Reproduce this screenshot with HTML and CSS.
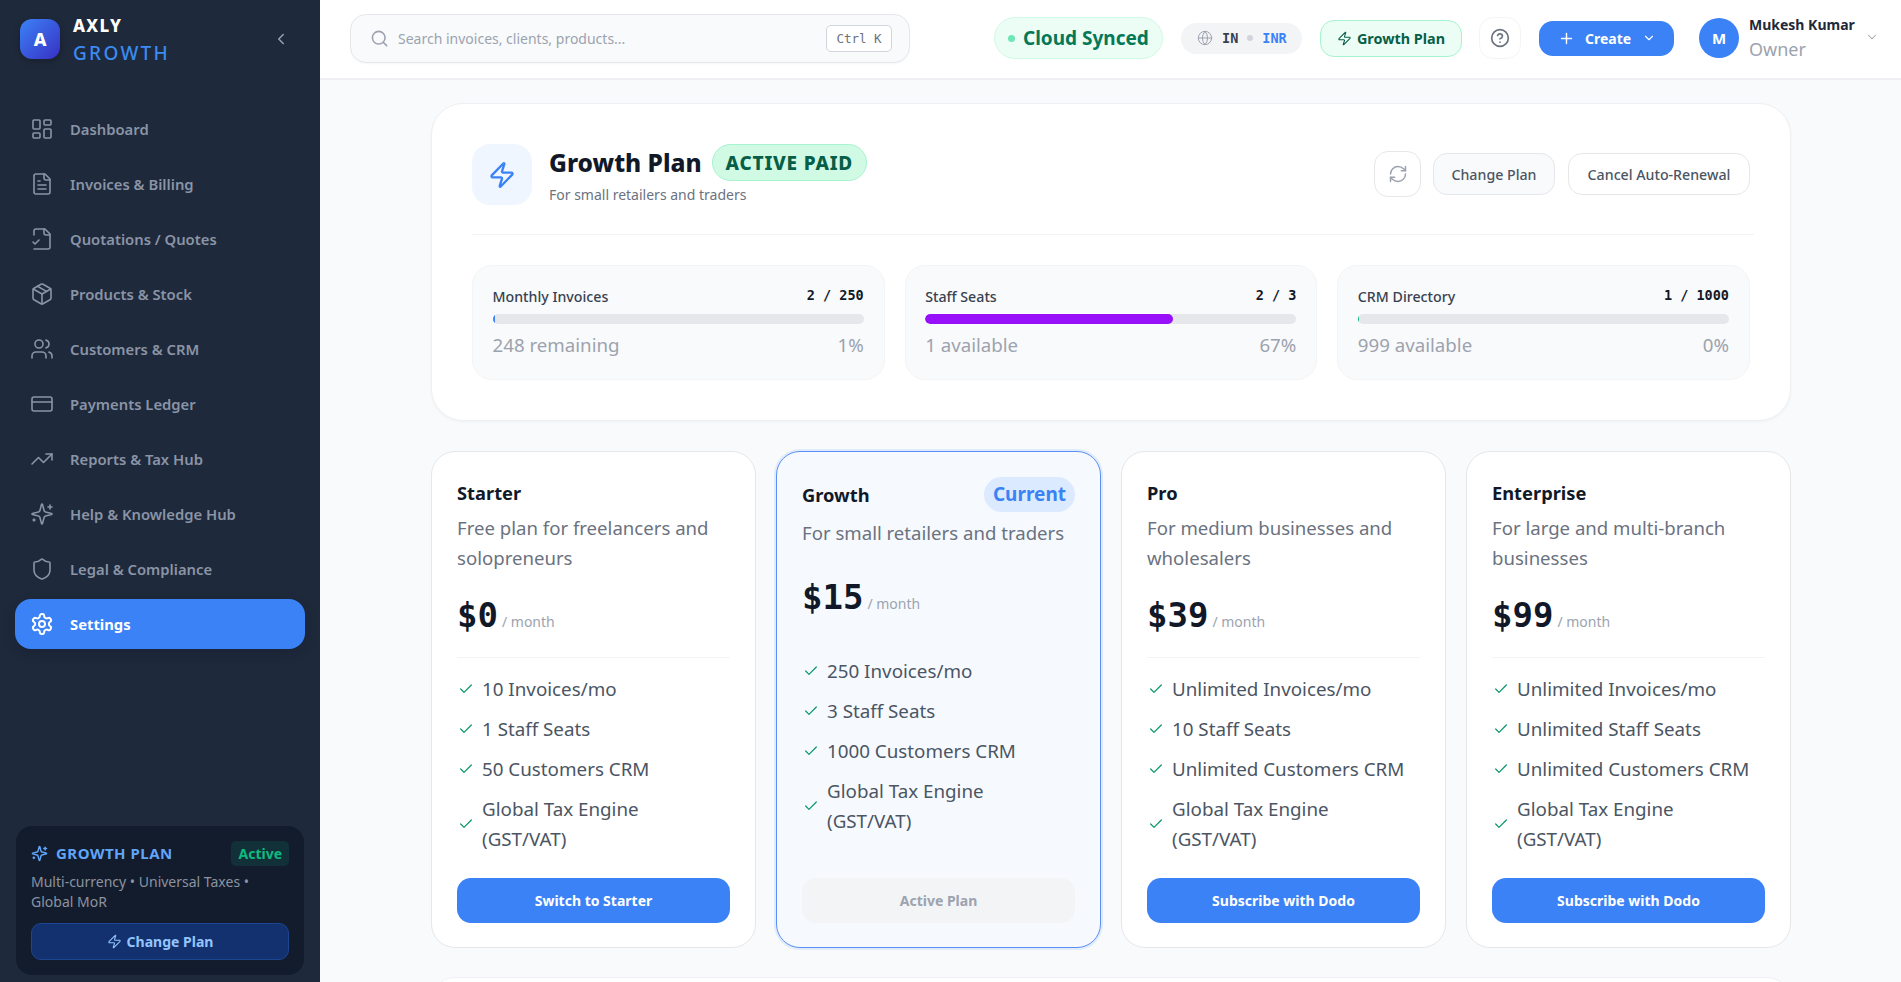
FILE: index.html
```html
<!DOCTYPE html>
<html lang="en">
<head>
<meta charset="utf-8">
<title>Axly Growth - Subscription</title>
<link rel="stylesheet" href="styles.css">
</head>
<body>
<svg class="sprite" aria-hidden="true">
  <symbol id="i-dash" viewBox="0 0 24 24"><rect x="3" y="3" width="7" height="9" rx="1"/><rect x="14" y="3" width="7" height="5" rx="1"/><rect x="14" y="12" width="7" height="9" rx="1"/><rect x="3" y="16" width="7" height="5" rx="1"/></symbol>
  <symbol id="i-file" viewBox="0 0 24 24"><path d="M15 2H6a2 2 0 0 0-2 2v16a2 2 0 0 0 2 2h12a2 2 0 0 0 2-2V7Z"/><path d="M14 2v4a2 2 0 0 0 2 2h4"/><path d="M10 9H8"/><path d="M16 13H8"/><path d="M16 17H8"/></symbol>
  <symbol id="i-filecheck" viewBox="0 0 24 24"><path d="M4 22h14a2 2 0 0 0 2-2V7l-5-5H6a2 2 0 0 0-2 2v4"/><path d="M14 2v4a2 2 0 0 0 2 2h4"/><path d="m3 15 2 2 4-4"/></symbol>
  <symbol id="i-package" viewBox="0 0 24 24"><path d="M11 21.73a2 2 0 0 0 2 0l7-4A2 2 0 0 0 21 16V8a2 2 0 0 0-1-1.73l-7-4a2 2 0 0 0-2 0l-7 4A2 2 0 0 0 3 8v8a2 2 0 0 0 1 1.73z"/><path d="M12 22V12"/><polyline points="3.29 7 12 12 20.71 7"/><path d="m7.5 4.27 9 5.15"/></symbol>
  <symbol id="i-users" viewBox="0 0 24 24"><path d="M16 21v-2a4 4 0 0 0-4-4H6a4 4 0 0 0-4 4v2"/><circle cx="9" cy="7" r="4"/><path d="M22 21v-2a4 4 0 0 0-3-3.87"/><path d="M16 3.13a4 4 0 0 1 0 7.75"/></symbol>
  <symbol id="i-card" viewBox="0 0 24 24"><rect x="2" y="5" width="20" height="14" rx="2"/><line x1="2" y1="10" x2="22" y2="10"/></symbol>
  <symbol id="i-trend" viewBox="0 0 24 24"><polyline points="22 7 13.5 15.5 8.5 10.5 2 17"/><polyline points="16 7 22 7 22 13"/></symbol>
  <symbol id="i-spark" viewBox="0 0 24 24"><path d="M9.937 15.5A2 2 0 0 0 8.5 14.063l-6.135-1.582a.5.5 0 0 1 0-.962L8.5 9.936A2 2 0 0 0 9.937 8.5l1.582-6.135a.5.5 0 0 1 .963 0L14.063 8.5A2 2 0 0 0 15.5 9.937l6.135 1.581a.5.5 0 0 1 0 .964L15.5 14.063a2 2 0 0 0-1.437 1.437l-1.582 6.135a.5.5 0 0 1-.963 0z"/><path d="M20 3v4"/><path d="M22 5h-4"/><path d="M4 17v2"/><path d="M5 18H3"/></symbol>
  <symbol id="i-shield" viewBox="0 0 24 24"><path d="M20 13c0 5-3.5 7.5-7.66 8.95a1 1 0 0 1-.67-.01C7.5 20.5 4 18 4 13V6a1 1 0 0 1 1-1c2 0 4.5-1.2 6.24-2.72a1.17 1.17 0 0 1 1.52 0C14.51 3.81 17 5 19 5a1 1 0 0 1 1 1z"/></symbol>
  <symbol id="i-gear" viewBox="0 0 24 24"><path d="M12.22 2h-.44a2 2 0 0 0-2 2v.18a2 2 0 0 1-1 1.73l-.43.25a2 2 0 0 1-2 0l-.15-.08a2 2 0 0 0-2.73.73l-.22.38a2 2 0 0 0 .73 2.73l.15.1a2 2 0 0 1 1 1.72v.51a2 2 0 0 1-1 1.74l-.15.09a2 2 0 0 0-.73 2.73l.22.38a2 2 0 0 0 2.73.73l.15-.08a2 2 0 0 1 2 0l.43.25a2 2 0 0 1 1 1.73V20a2 2 0 0 0 2 2h.44a2 2 0 0 0 2-2v-.18a2 2 0 0 1 1-1.73l.43-.25a2 2 0 0 1 2 0l.15.08a2 2 0 0 0 2.73-.73l.22-.39a2 2 0 0 0-.73-2.73l-.15-.08a2 2 0 0 1-1-1.74v-.5a2 2 0 0 1 1-1.74l.15-.09a2 2 0 0 0 .73-2.73l-.22-.38a2 2 0 0 0-2.73-.73l-.15.08a2 2 0 0 1-2 0l-.43-.25a2 2 0 0 1-1-1.73V4a2 2 0 0 0-2-2z"/><circle cx="12" cy="12" r="3"/></symbol>
  <symbol id="i-zap" viewBox="0 0 24 24"><path d="M4 14a1 1 0 0 1-.78-1.63l9.9-10.2a.5.5 0 0 1 .86.46l-1.92 6.02A1 1 0 0 0 13 10h7a1 1 0 0 1 .78 1.63l-9.9 10.2a.5.5 0 0 1-.86-.46l1.92-6.02A1 1 0 0 0 11 14z"/></symbol>
  <symbol id="i-search" viewBox="0 0 24 24"><path d="m21 21-4.34-4.34"/><circle cx="11" cy="11" r="8"/></symbol>
  <symbol id="i-globe" viewBox="0 0 24 24"><circle cx="12" cy="12" r="10"/><path d="M12 2a14.5 14.5 0 0 0 0 20 14.5 14.5 0 0 0 0-20"/><path d="M2 12h20"/></symbol>
  <symbol id="i-help" viewBox="0 0 24 24"><circle cx="12" cy="12" r="10"/><path d="M9.09 9a3 3 0 0 1 5.83 1c0 2-3 3-3 3"/><path d="M12 17h.01"/></symbol>
  <symbol id="i-refresh" viewBox="0 0 24 24"><path d="M3 12a9 9 0 0 1 9-9 9.75 9.75 0 0 1 6.74 2.74L21 8"/><path d="M21 3v5h-5"/><path d="M21 12a9 9 0 0 1-9 9 9.75 9.75 0 0 1-6.74-2.74L3 16"/><path d="M8 16H3v5"/></symbol>
  <symbol id="i-plus" viewBox="0 0 24 24"><path d="M5 12h14"/><path d="M12 5v14"/></symbol>
  <symbol id="i-down" viewBox="0 0 24 24"><path d="m6 9 6 6 6-6"/></symbol>
  <symbol id="i-left" viewBox="0 0 24 24"><path d="m15 18-6-6 6-6"/></symbol>
  <symbol id="i-check" viewBox="0 0 24 24"><path d="M20 6 9 17l-5-5"/></symbol>
</svg>

<div class="app">
  <aside class="sidebar">
    <div class="brand">
      <div class="brand-mark">A</div>
      <div class="brand-text">
        <div class="brand-name">AXLY</div>
        <div class="brand-sub">GROWTH</div>
      </div>
      <svg class="icon brand-toggle"><use href="#i-left"/></svg>
    </div>
    <nav class="nav">
      <a class="nav-item"><svg class="icon nav-icon"><use href="#i-dash"/></svg>Dashboard</a>
      <a class="nav-item"><svg class="icon nav-icon"><use href="#i-file"/></svg>Invoices &amp; Billing</a>
      <a class="nav-item"><svg class="icon nav-icon"><use href="#i-filecheck"/></svg>Quotations / Quotes</a>
      <a class="nav-item"><svg class="icon nav-icon"><use href="#i-package"/></svg>Products &amp; Stock</a>
      <a class="nav-item"><svg class="icon nav-icon"><use href="#i-users"/></svg>Customers &amp; CRM</a>
      <a class="nav-item"><svg class="icon nav-icon"><use href="#i-card"/></svg>Payments Ledger</a>
      <a class="nav-item"><svg class="icon nav-icon"><use href="#i-trend"/></svg>Reports &amp; Tax Hub</a>
      <a class="nav-item"><svg class="icon nav-icon"><use href="#i-spark"/></svg>Help &amp; Knowledge Hub</a>
      <a class="nav-item"><svg class="icon nav-icon"><use href="#i-shield"/></svg>Legal &amp; Compliance</a>
      <a class="nav-item nav-active"><svg class="icon nav-icon"><use href="#i-gear"/></svg>Settings</a>
    </nav>
    <div class="side-plan">
      <div class="side-plan-head">
        <svg class="icon side-plan-icon"><use href="#i-spark"/></svg>
        <span class="side-plan-title">GROWTH PLAN</span>
        <span class="side-plan-badge">Active</span>
      </div>
      <p class="side-plan-desc">Multi-currency • Universal Taxes • Global MoR</p>
      <button class="side-plan-btn"><svg class="icon side-plan-zap"><use href="#i-zap"/></svg>Change Plan</button>
    </div>
  </aside>

  <div class="main">
    <header class="topbar">
      <div class="search">
        <svg class="icon search-icon"><use href="#i-search"/></svg>
        <span class="search-text">Search invoices, clients, products...</span>
        <kbd class="kbd">Ctrl K</kbd>
      </div>
      <div class="top-actions">
        <div class="pill-sync"><span class="sync-dot"></span>Cloud Synced</div>
        <div class="pill-region">
          <svg class="icon region-globe"><use href="#i-globe"/></svg>
          <span class="region-code">IN</span>
          <span class="region-dot"></span>
          <span class="region-cur">INR</span>
        </div>
        <div class="pill-plan"><svg class="icon pill-plan-icon"><use href="#i-zap"/></svg>Growth Plan</div>
        <button class="help-btn"><svg class="icon help-icon"><use href="#i-help"/></svg></button>
        <button class="create-btn"><svg class="icon create-plus"><use href="#i-plus"/></svg>Create<svg class="icon create-down"><use href="#i-down"/></svg></button>
        <div class="user">
          <div class="avatar">M</div>
          <div class="user-text">
            <div class="user-name">Mukesh Kumar</div>
            <div class="user-role">Owner</div>
          </div>
          <svg class="icon user-down"><use href="#i-down"/></svg>
        </div>
      </div>
    </header>

    <main class="content">
      <div class="container">
        <section class="summary">
          <div class="summary-head">
            <div class="summary-tile"><svg class="icon summary-zap"><use href="#i-zap"/></svg></div>
            <div class="summary-info">
              <div class="summary-title-row">
                <h1 class="summary-title">Growth Plan</h1>
                <span class="summary-badge">ACTIVE PAID</span>
              </div>
              <div class="summary-sub">For small retailers and traders</div>
            </div>
            <div class="summary-actions">
              <button class="btn-icon"><svg class="icon btn-refresh"><use href="#i-refresh"/></svg></button>
              <button class="btn-soft">Change Plan</button>
              <button class="btn-line">Cancel Auto-Renewal</button>
            </div>
          </div>
          <div class="stats">
            <div class="stat">
              <div class="stat-top"><span class="stat-label">Monthly Invoices</span><span class="stat-val">2 / 250</span></div>
              <div class="bar"><div class="bar-fill fill-blue" style="width:0.8%"></div></div>
              <div class="stat-bottom"><span>248 remaining</span><span>1%</span></div>
            </div>
            <div class="stat">
              <div class="stat-top"><span class="stat-label">Staff Seats</span><span class="stat-val">2 / 3</span></div>
              <div class="bar"><div class="bar-fill fill-purple" style="width:66.7%"></div></div>
              <div class="stat-bottom"><span>1 available</span><span>67%</span></div>
            </div>
            <div class="stat">
              <div class="stat-top"><span class="stat-label">CRM Directory</span><span class="stat-val">1 / 1000</span></div>
              <div class="bar"><div class="bar-fill fill-green" style="width:0.4%"></div></div>
              <div class="stat-bottom"><span>999 available</span><span>0%</span></div>
            </div>
          </div>
        </section>

        <section class="plans">
          <article class="plan">
            <div class="plan-head"><h2 class="plan-name">Starter</h2></div>
            <p class="plan-desc">Free plan for freelancers and solopreneurs</p>
            <div class="plan-price"><span class="price-num">$0</span><span class="price-per">/ month</span></div>
            <ul class="plan-list">
              <li class="plan-feat"><svg class="icon feat-check"><use href="#i-check"/></svg>10 Invoices/mo</li>
              <li class="plan-feat"><svg class="icon feat-check"><use href="#i-check"/></svg>1 Staff Seats</li>
              <li class="plan-feat"><svg class="icon feat-check"><use href="#i-check"/></svg>50 Customers CRM</li>
              <li class="plan-feat"><svg class="icon feat-check"><use href="#i-check"/></svg><span class="feat-wrap">Global Tax Engine (GST/VAT)</span></li>
            </ul>
            <button class="plan-btn">Switch to Starter</button>
          </article>
          <article class="plan plan-active">
            <div class="plan-head"><h2 class="plan-name">Growth</h2><span class="plan-current">Current</span></div>
            <p class="plan-desc">For small retailers and traders</p>
            <div class="plan-price"><span class="price-num">$15</span><span class="price-per">/ month</span></div>
            <ul class="plan-list">
              <li class="plan-feat"><svg class="icon feat-check"><use href="#i-check"/></svg>250 Invoices/mo</li>
              <li class="plan-feat"><svg class="icon feat-check"><use href="#i-check"/></svg>3 Staff Seats</li>
              <li class="plan-feat"><svg class="icon feat-check"><use href="#i-check"/></svg>1000 Customers CRM</li>
              <li class="plan-feat"><svg class="icon feat-check"><use href="#i-check"/></svg><span class="feat-wrap">Global Tax Engine (GST/VAT)</span></li>
            </ul>
            <button class="plan-btn plan-btn-off">Active Plan</button>
          </article>
          <article class="plan">
            <div class="plan-head"><h2 class="plan-name">Pro</h2></div>
            <p class="plan-desc">For medium businesses and wholesalers</p>
            <div class="plan-price"><span class="price-num">$39</span><span class="price-per">/ month</span></div>
            <ul class="plan-list">
              <li class="plan-feat"><svg class="icon feat-check"><use href="#i-check"/></svg>Unlimited Invoices/mo</li>
              <li class="plan-feat"><svg class="icon feat-check"><use href="#i-check"/></svg>10 Staff Seats</li>
              <li class="plan-feat"><svg class="icon feat-check"><use href="#i-check"/></svg>Unlimited Customers CRM</li>
              <li class="plan-feat"><svg class="icon feat-check"><use href="#i-check"/></svg><span class="feat-wrap">Global Tax Engine (GST/VAT)</span></li>
            </ul>
            <button class="plan-btn">Subscribe with Dodo</button>
          </article>
          <article class="plan">
            <div class="plan-head"><h2 class="plan-name">Enterprise</h2></div>
            <p class="plan-desc">For large and multi-branch businesses</p>
            <div class="plan-price"><span class="price-num">$99</span><span class="price-per">/ month</span></div>
            <ul class="plan-list">
              <li class="plan-feat"><svg class="icon feat-check"><use href="#i-check"/></svg>Unlimited Invoices/mo</li>
              <li class="plan-feat"><svg class="icon feat-check"><use href="#i-check"/></svg>Unlimited Staff Seats</li>
              <li class="plan-feat"><svg class="icon feat-check"><use href="#i-check"/></svg>Unlimited Customers CRM</li>
              <li class="plan-feat"><svg class="icon feat-check"><use href="#i-check"/></svg><span class="feat-wrap">Global Tax Engine (GST/VAT)</span></li>
            </ul>
            <button class="plan-btn">Subscribe with Dodo</button>
          </article>
        </section>
        <section class="next-card"></section>
      </div>
    </main>
  </div>
</div>
</body>
</html>
```
FILE: styles.css
```css
* { box-sizing: border-box; }
html, body { margin: 0; height: 100%; overflow: hidden; }
body { font-family: "Noto Sans", "Open Sans", sans-serif; color: #111827; background: #f8fafc; }
h1, h2, p, ul { margin: 0; padding: 0; }
ul { list-style: none; }
button { font-family: inherit; cursor: pointer; border: 0; background: none; padding: 0; }
.sprite { display: none; }
.icon { fill: none; stroke: currentColor; stroke-width: 2; stroke-linecap: round; stroke-linejoin: round; flex: none; }

.app { display: flex; height: 982px; overflow: hidden; }

/* Sidebar */
.sidebar { width: 320px; flex: none; background: #1e293b; display: flex; flex-direction: column; }
.brand { height: 78px; display: flex; align-items: center; padding: 0 20px; gap: 13px; }
.brand-mark { width: 40px; height: 40px; border-radius: 12px; background: linear-gradient(135deg, #3b82f6, #3730c4); color: #fff; font-weight: 800; font-size: 18px; display: flex; align-items: center; justify-content: center; box-shadow: 0 2px 6px rgba(0,0,0,.25); }
.brand-text { flex: 1; }
.brand-name { color: #fff; font-weight: 800; font-size: 17px; line-height: 22px; letter-spacing: 1.3px; margin-top: 2px; }
.brand-sub { color: #3b8bf0; font-weight: 500; font-size: 19px; line-height: 26px; letter-spacing: 2.3px; margin-top: 3px; }
.brand-toggle { width: 18px; height: 18px; color: #94a3b8; margin-right: 10px; }

.nav { display: flex; flex-direction: column; gap: 5px; padding: 26px 15px 0; flex: 1; }
.nav-item { height: 50px; display: flex; align-items: center; gap: 17px; padding: 0 16px; border-radius: 16px; color: #8a94a6; font-size: 14.8px; font-weight: 600; }
.nav-icon { width: 24px; height: 24px; stroke-width: 1.6; color: #8a94a6; margin-left: -1px; margin-right: -1px; }
.nav-active { background: #3b82f6; color: #fff; font-weight: 700; box-shadow: 0 4px 12px rgba(15,23,42,.3); }
.nav-active .nav-icon { color: #fff; stroke-width: 2; }

.side-plan { margin: 0 16px 7px; padding: 14px 15px 15px; background: #131c2c; border-radius: 16px; }
.side-plan-head { display: flex; align-items: center; height: 26px; }
.side-plan-icon { width: 17px; height: 17px; color: #60a5fa; margin-right: 8px; }
.side-plan-title { color: #60a5fa; font-size: 15px; font-weight: 700; letter-spacing: .5px; flex: 1; }
.side-plan-badge { color: #10b981; background: rgba(16,185,129,.13); font-size: 14px; font-weight: 700; line-height: 25px; padding: 0 7px; border-radius: 5px; }
.side-plan-desc { color: #8b93a1; font-size: 14px; line-height: 20px; margin-top: 6px; }
.side-plan-btn { margin-top: 11px; width: 100%; height: 37px; background: #13306f; border: 1px solid #1d4692; border-radius: 10px; color: #93c5fd; font-size: 14px; font-weight: 700; display: flex; align-items: center; justify-content: center; gap: 5px; }
.side-plan-zap { width: 15px; height: 15px; stroke-width: 1.8; }

/* Main */
.main { flex: 1; min-width: 0; display: flex; flex-direction: column; }
.topbar { height: 80px; flex: none; background: #fff; border-bottom: 2px solid #eef0f3; display: flex; align-items: center; padding: 0 22px 2px 30px; justify-content: space-between; }
.search { width: 560px; height: 49px; background: #f8fafc; border: 1px solid #e5e7eb; border-radius: 16px; display: flex; align-items: center; padding: 0 17px 0 19px; box-shadow: 0 1px 2px rgba(0,0,0,.03); }
.search-icon { width: 19px; height: 19px; color: #9ca3af; }
.search-text { flex: 1; margin-left: 9px; font-size: 14px; color: #9ca3af; }
.kbd { width: 66px; height: 27px; background: #fff; border: 1px solid #d1d5db; border-radius: 5px; font-family: "DejaVu Sans Mono", monospace; font-size: 12.5px; color: #6b7280; display: flex; align-items: center; justify-content: center; }

.top-actions { display: flex; align-items: center; gap: 18px; }
.pill-sync { width: 169px; height: 42px; border-radius: 21px; background: #ecfdf5; border: 1px solid #d1fae5; color: #047857; font-size: 19px; font-weight: 700; display: flex; align-items: center; padding-left: 13px; gap: 8px; }
.sync-dot { width: 7px; height: 7px; border-radius: 50%; background: #6ee7b7; }
.pill-region { width: 121px; height: 31px; border-radius: 16px; background: #f3f4f6; display: flex; align-items: center; padding-left: 16px; }
.region-globe { width: 16px; height: 16px; color: #9ca3af; stroke-width: 1.5; }
.region-code { font-family: "DejaVu Sans Mono", monospace; font-weight: 700; font-size: 13.5px; color: #374151; margin-left: 9px; }
.region-dot { width: 6px; height: 6px; border-radius: 50%; background: #d1d5db; margin: 0 9px; }
.region-cur { font-family: "DejaVu Sans Mono", monospace; font-weight: 700; font-size: 13.5px; color: #3b82f6; }
.pill-plan { width: 142px; height: 37px; border-radius: 14px; background: #ecfdf5; border: 1px solid #a7f3d0; color: #065f46; font-size: 14.4px; font-weight: 700; display: flex; align-items: center; justify-content: center; gap: 5px; }
.pill-plan-icon { width: 15px; height: 15px; stroke-width: 1.8; }
.help-btn { width: 42px; height: 42px; border-radius: 14px; background: #fff; border: 1px solid #f3f4f6; color: #6b7280; display: flex; align-items: center; justify-content: center; margin-left: -1px; }
.help-icon { width: 20px; height: 20px; }
.create-btn { width: 135px; height: 35px; border-radius: 14px; background: #3b82f6; color: #fff; font-size: 14px; font-weight: 700; display: flex; align-items: center; padding-left: 19px; }
.create-plus { width: 17px; height: 17px; margin-right: 10px; }
.create-down { width: 14px; height: 14px; margin-left: 11px; }
.user { display: flex; align-items: center; margin-left: 7px; }
.avatar { width: 40px; height: 40px; border-radius: 50%; background: #3b82f6; color: #fff; font-weight: 700; font-size: 15px; display: flex; align-items: center; justify-content: center; }
.user-text { margin-left: 10px; width: 116px; }
.user-name { font-size: 14px; font-weight: 700; line-height: 20px; color: #1f2937; white-space: nowrap; }
.user-role { font-size: 18px; line-height: 24px; color: #9ca3af; margin-top: 2px; }
.user-down { width: 14px; height: 14px; color: #9ca3af; stroke-width: 1.8; margin-bottom: 2px; }

/* Content */
.content { flex: 1; min-height: 0; overflow: hidden; padding-top: 23px; }
.container { width: 1360px; margin-left: 111px; }

.summary { height: 318px; background: #fff; border: 1px solid #eef0f3; border-radius: 32px; padding: 40px 40px 0; box-shadow: 0 1px 3px rgba(0,0,0,.04); }
.summary-head { display: flex; align-items: flex-start; height: 91px; margin-right: -4px; padding-right: 4px; border-bottom: 1px solid #f3f4f6; }
.summary-tile { width: 60px; height: 61px; border-radius: 18px; background: #eff6ff; color: #3b82f6; display: flex; align-items: center; justify-content: center; }
.summary-zap { width: 28px; height: 28px; }
.summary-info { margin-left: 17px; flex: 1; }
.summary-title-row { display: flex; align-items: center; gap: 10px; }
.summary-title { font-size: 24.5px; font-weight: 800; line-height: 37px; color: #111827; }
.summary-badge { height: 37px; line-height: 36px; padding: 0 13px; border-radius: 19px; background: #d1fae5; border: 1px solid #a7f3d0; color: #065f46; font-size: 19px; font-weight: 800; letter-spacing: .8px; }
.summary-sub { font-size: 14px; color: #6b7280; line-height: 20px; margin-top: 4px; }
.summary-actions { display: flex; align-items: center; gap: 13px; margin-top: 7px; }
.btn-icon { width: 47px; height: 46px; border-radius: 14px; background: #fff; border: 1px solid #e5e7eb; color: #9ca3af; display: flex; align-items: center; justify-content: center; margin-right: -1px; }
.btn-refresh { width: 20px; height: 20px; stroke-width: 1.8; }
.btn-soft, .btn-line { height: 42px; border-radius: 14px; border: 1px solid #e5e7eb; font-size: 14.2px; font-weight: 500; color: #4b5563; }
.btn-soft { width: 122px; background: #f9fafb; }
.btn-line { width: 182px; background: #fff; }

.stats { display: grid; grid-template-columns: repeat(3, 1fr); gap: 20px; margin-top: 30px; }
.stat { height: 115px; background: #f9fafb; border: 1px solid #f3f4f6; border-radius: 20px; padding: 20px 20px 20px 19.5px; }
.stat-top { display: flex; justify-content: space-between; align-items: center; height: 23px; }
.stat-label { font-size: 14.2px; font-weight: 500; color: #374151; margin-top: -2px; }
.stat-val { font-family: "DejaVu Sans Mono", monospace; font-weight: 700; font-size: 13.5px; color: #111827; margin-top: -5px; }
.bar { height: 10px; border-radius: 5px; background: #e5e7eb; overflow: hidden; margin-top: 5px; }
.bar-fill { height: 100%; border-radius: 5px; }
.fill-blue { background: #3b82f6; }
.fill-purple { background: #9810fa; }
.fill-green { background: #10b981; }
.stat-bottom { display: flex; justify-content: space-between; font-size: 18.7px; color: #9ca3af; line-height: 24px; margin-top: 9px; }

.plans { display: grid; grid-template-columns: repeat(4, 1fr); gap: 20px; margin-top: 30px; height: 497px; }
.plan { background: #fff; border: 1px solid #e5e7eb; border-radius: 24px; padding: 25px 25px 24px; display: flex; flex-direction: column; }
.plan-head { display: flex; justify-content: space-between; align-items: center; min-height: 27px; margin-top: 2px; }
.plan-name { font-size: 18.3px; font-weight: 700; line-height: 27px; color: #111827; }
.plan-desc { font-size: 18.6px; line-height: 30px; color: #6b7280; margin-top: 7px; }
.plan-price { display: flex; align-items: baseline; margin-top: 20px; height: 65px; padding-bottom: 20px; border-bottom: 1px solid #f3f4f6; }
.price-num { font-family: "DejaVu Sans Mono", monospace; font-size: 34px; font-weight: 700; line-height: 44px; color: #111827; }
.price-per { font-size: 14px; color: #9ca3af; margin-left: 4px; }
.plan-list { display: flex; flex-direction: column; gap: 10px; margin-top: 16px; }
.plan-feat { display: flex; align-items: center; gap: 8px; font-size: 18.8px; line-height: 30px; color: #4b5563; }
.feat-wrap { max-width: 210px; }
.feat-check { width: 16px; height: 16px; color: #059669; stroke-width: 1.8; margin-left: 1px; }
.plan-btn { margin-top: auto; height: 45px; flex: none; border-radius: 14px; background: #3b82f6; color: #fff; font-size: 14px; font-weight: 700; }
.plan-btn-off { background: #f3f4f6; color: #9ca3af; }

.plan-active { background: #f6faff; border: 1.5px solid #5b8ff5; box-shadow: 0 0 0 2px rgba(59,130,246,.12); }
.plan-active .plan-head { margin-top: 0; min-height: 35px; }
.plan-active .plan-desc { margin-top: 6px; }
.plan-active .plan-price { margin-top: 27px; border-bottom-color: transparent; }
.plan-current { height: 35px; line-height: 35px; padding: 0 9px; border-radius: 18px; background: #dbeafe; color: #3b82f6; font-size: 19px; font-weight: 700; }

.next-card { height: 200px; margin-top: 29px; background: #fff; border: 1px solid #f0f1f4; border-radius: 24px; }
```
